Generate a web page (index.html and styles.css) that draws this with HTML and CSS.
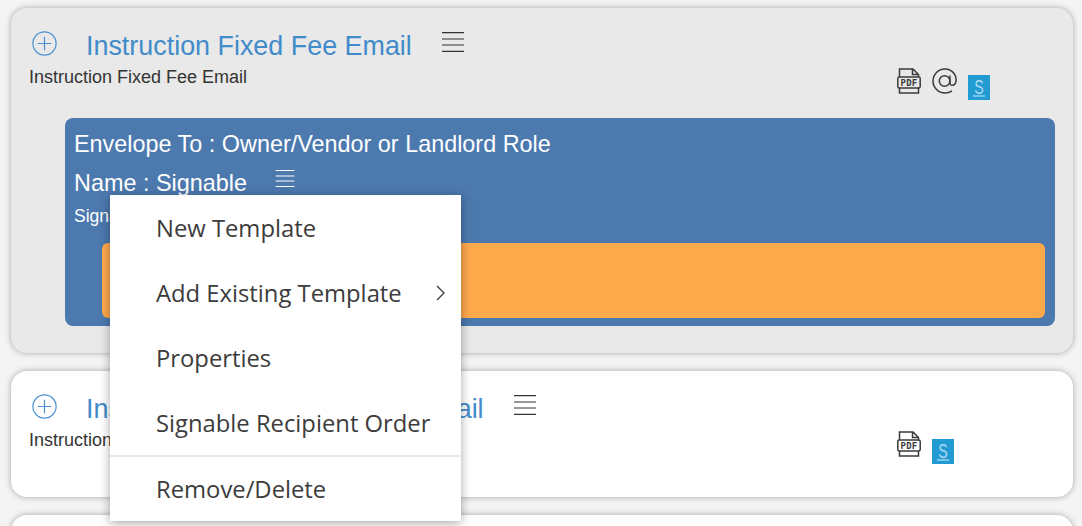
FILE: index.html
```html
<!DOCTYPE html>
<html lang="en">
<head>
<meta charset="utf-8">
<title>Instruction Fixed Fee Email</title>
<link rel="stylesheet" href="styles.css">
</head>
<body>
<svg class="defs" width="0" height="0" aria-hidden="true">
  <symbol id="plus" viewBox="0 0 25 25"><circle cx="12.5" cy="12.5" r="11.6" fill="none" stroke="currentColor" stroke-width="1.2"/><path d="M12.5 5.8v13.4M5.8 12.5h13.4" fill="none" stroke="currentColor" stroke-width="1.2"/></symbol>
  <symbol id="menu" viewBox="0 0 22 20"><path d="M0 .6h22M0 7h22M0 13h22M0 19.4h22" fill="none" stroke="currentColor" stroke-width="1.2"/></symbol>
  <symbol id="at" viewBox="0 0 26 26"><circle cx="12.6" cy="13" r="5.3" fill="none" stroke="#3a3a3a" stroke-width="1.5"/><path d="M17.9 7.6v7.4c0 3.2 4.6 3 5.8-.6C25.5 8 20.5 1 13 1 6.4 1 1 6.4 1 13s5.4 12 12 12c2.7 0 5-.7 7-2.1" fill="none" stroke="#3a3a3a" stroke-width="1.5"/></symbol>
</svg>

<main class="page">
  <section class="card card-active">
    <div class="card-head">
      <svg class="icon-plus"><use href="#plus"/></svg>
      <h2 class="card-title">Instruction Fixed Fee Email</h2>
      <svg class="icon-menu"><use href="#menu"/></svg>
    </div>
    <div class="card-sub">
      <p class="card-desc">Instruction Fixed Fee Email</p>
      <div class="doc-icons">
        <svg class="icon-pdf" viewBox="0 0 24 26"><path d="M2.5 9V1h13.5l5.500 5.500V9M2.500 20v5h19v-5M15.500 1v5.500h6" fill="none" stroke="#3a3a3a" stroke-width="1.500"/><rect x=".8" y="9" width="22.400" height="11" rx="1.500" fill="none" stroke="#3a3a3a" stroke-width="1.500"/><text x="12" y="17.800" text-anchor="middle" class="pdf-label">PDF</text></svg>
        <svg class="icon-at"><use href="#at"/></svg>
        <svg class="icon-sign" viewBox="0 0 22 25"><rect width="22" height="25" fill="#219bd2"/><text x="11" y="18.500" text-anchor="middle" textLength="9.500" lengthAdjust="spacingAndGlyphs" class="sign-label">S</text><path d="M5 21h12" stroke="#a9daf1" stroke-width="1.300"/></svg>
      </div>
    </div>
    <div class="envelope">
      <div class="env-line">Envelope To : Owner/Vendor or Landlord Role</div>
      <div class="env-line env-name">Name : Signable<svg class="icon-menu-small"><use href="#menu"/></svg></div>
      <div class="env-small">Signable</div>
      <div class="template"></div>
    </div>
  </section>

  <section class="card card-plain">
    <div class="card-head">
      <svg class="icon-plus"><use href="#plus"/></svg>
      <h2 class="card-title">Instruction Percentage Fee Email</h2>
      <svg class="icon-menu"><use href="#menu"/></svg>
    </div>
    <div class="card-sub">
      <p class="card-desc">Instruction Percentage Fee Email</p>
      <div class="doc-icons doc-icons-plain">
        <svg class="icon-pdf" viewBox="0 0 24 26"><path d="M2.5 9V1h13.5l5.500 5.500V9M2.500 20v5h19v-5M15.500 1v5.500h6" fill="none" stroke="#3a3a3a" stroke-width="1.500"/><rect x=".8" y="9" width="22.400" height="11" rx="1.500" fill="none" stroke="#3a3a3a" stroke-width="1.500"/><text x="12" y="17.800" text-anchor="middle" class="pdf-label">PDF</text></svg>
        <svg class="icon-sign" viewBox="0 0 22 25"><rect width="22" height="25" fill="#219bd2"/><text x="11" y="18.500" text-anchor="middle" textLength="9.500" lengthAdjust="spacingAndGlyphs" class="sign-label">S</text><path d="M5 21h12" stroke="#a9daf1" stroke-width="1.300"/></svg>
      </div>
    </div>
  </section>

  <section class="card card-plain"></section>
</main>

<nav class="context-menu">
  <div class="menu-item">New Template</div>
  <div class="menu-item">Add Existing Template<svg class="chevron" viewBox="0 0 9 16"><path d="M1 1l7 7-7 7" fill="none" stroke="#3a3a3a" stroke-width="1.3"/></svg></div>
  <div class="menu-item">Properties</div>
  <div class="menu-item">Signable Recipient Order</div>
  <div class="menu-item menu-item-sep">Remove/Delete</div>
</nav>
</body>
</html>
```
FILE: styles.css
```css
* { box-sizing: border-box; }
html, body { height: 100%; }
body {
  margin: 0;
  overflow: hidden;
  background: #f4f4f4;
  font-family: "Liberation Sans", Arial, sans-serif;
  color: #333;
}
.defs { position: absolute; }
.page {
  display: flex;
  flex-direction: column;
  gap: 18px;
  height: 100vh;
  overflow: hidden;
  padding: 8px 9px 0 11px;
}
.card {
  flex: none;
  border-radius: 16px;
  padding: 23px 18px 0;
  box-shadow: 0 0 6px rgba(0, 0, 0, .32);
  background: #fff;
}
.card-active { height: 345px; background: #e9e9e9; }
.card-plain { height: 126px; }
.card-head { display: flex; align-items: flex-start; height: 32px; }
.icon-plus { width: 25px; height: 25px; margin-left: 3px; color: #4a90d0; flex: none; }
.card-title {
  margin: 0 0 0 29px;
  font-size: 26.9px;
  line-height: 30px;
  font-weight: 400;
  color: #428bca;
  white-space: nowrap;
}
.icon-menu { width: 22px; height: 20px; margin: 1px 0 0 30.5px; color: #333; flex: none; }
.card-sub { position: relative; display: flex; justify-content: space-between; height: 55px; }
.card-desc { margin: -8px 0 0; font-size: 18px; line-height: 44px; height: 28px; }
.doc-icons { display: flex; align-items: flex-start; margin-right: 65px; }
.doc-icons-plain { margin-right: 101px; }
.icon-pdf { width: 24px; height: 26px; margin-top: 5px; }
.icon-at { width: 26px; height: 26px; margin: 5px 0 0 11px; }
.icon-sign { width: 22px; height: 25px; margin: 12px 0 0 10px; }
.doc-icons-plain .icon-sign { margin: 13px 0 0 11px; }
.envelope {
  height: 208px;
  padding: 7px 10px 0 9px;
  margin-left: 36px;
  border-radius: 8px;
  background: #4c79ae;
  color: #fff;
}
.env-line { font-size: 23.4px; line-height: 38px; white-space: nowrap; }
.env-name { display: flex; align-items: flex-start; line-height: 40px; }
.icon-menu-small { width: 20px; height: 17px; margin: 7px 0 0 28px; color: #fff; }
.env-small { font-size: 17.5px; line-height: 22px; margin-top: 2px; }
.template {
  height: 75px;
  margin: 16px 0 0 28px;
  border-radius: 6px;
  background: #ffa94d;
}
.context-menu {
  position: absolute;
  left: 110px;
  top: 195px;
  width: 351px;
  height: 326px;
  background: #fff;
  box-shadow: 0 2px 10px rgba(0, 0, 0, .35);
  font-family: "Open Sans", sans-serif;
  font-size: 23.8px;
  color: #3c3c3c;
}
.menu-item {
  position: relative;
  height: 65px;
  padding: 0 46px;
  line-height: 67px;
  white-space: nowrap;
}
.menu-item-sep { height: 66px; border-top: 2px solid #e9e9e9; line-height: 65px; }
.chevron { position: absolute; right: 16px; top: 25px; width: 9px; height: 16px; }
.pdf-label { font: 700 9px "DejaVu Sans Mono", monospace; fill: #3a3a3a; letter-spacing: .3px; }
.sign-label { font: 400 20px "Liberation Sans", sans-serif; fill: #a9daf1; }
```
